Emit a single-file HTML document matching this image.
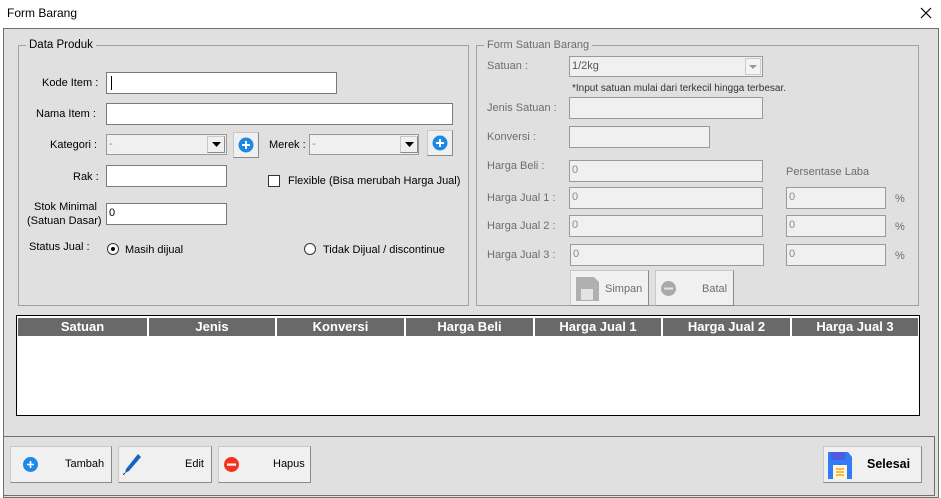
<!DOCTYPE html><html><head><style>
*{box-sizing:border-box;margin:0;padding:0}
body{width:941px;height:489px;background:#fff;font-family:"Liberation Sans",sans-serif;font-size:11px;color:#000;position:relative;overflow:hidden}
.a{position:absolute}
.in{position:absolute;background:#fff;border:1px solid #7a7a7a;height:22px}
.dis{background:#f0f0f0;border:1px solid #9a9a9a;color:#8a8a8a;padding:3px 0 0 2px}
.lbl{position:absolute;white-space:nowrap}
.gl{color:#6d6d6d}
fieldset{position:absolute;border:1px solid #a0a0a0}
.btn{position:absolute;background:#f0f0f0;border:1px solid #c8c8c8;border-right-color:#8a8a8a;border-bottom-color:#8a8a8a}
.th{position:absolute;top:0;height:18px;color:#fff;font-weight:bold;font-size:13px;text-align:center;line-height:18px;border-left:2px solid #fff}
</style></head><body>
<div class="lbl" style="left:7px;top:6px;font-size:12px">Form Barang</div>
<svg class="a" style="left:920px;top:7px" width="12" height="12"><path d="M1 1L11 11M11 1L1 11" stroke="#000" stroke-width="1.2"/></svg>
<div class="a" style="left:3px;top:28px;width:936px;height:470px;background:#e0e0e0;border:1px solid #707070"></div>

<div class="a" style="left:18px;top:45px;width:451px;height:261px;border:1px solid #a0a0a0"></div>
<div class="lbl" style="left:26px;top:39px;background:#e0e0e0;padding:0 3px;font-size:11.5px">Data Produk</div>
<div class="lbl" style="left:42px;top:77px">Kode Item :</div>
<div class="in" style="left:106px;top:72px;width:231px"><div class="a" style="left:4px;top:3px;width:1px;height:14px;background:#000"></div></div>
<div class="lbl" style="left:36px;top:108px">Nama Item :</div>
<div class="in" style="left:106px;top:103px;width:347px"></div>
<div class="lbl" style="left:50px;top:139px">Kategori :</div>
<div class="in dis" style="left:106px;top:134px;width:121px;height:21px">-</div>
<div class="btn" style="left:207px;top:136px;width:18px;height:17px"><svg class="a" style="left:4px;top:5px" width="9" height="6"><path d="M0 0H9L4.5 5z" fill="#000"/></svg></div>
<div class="btn" style="left:233px;top:132px;width:26px;height:26px"><svg class="a" style="left:4px;top:4px" width="16" height="16"><circle cx="8" cy="8" r="7.5" fill="#1e88e5"/><path d="M8 4v8M4 8h8" stroke="#fff" stroke-width="2"/></svg></div>
<div class="lbl" style="left:269px;top:139px">Merek :</div>
<div class="in dis" style="left:309px;top:134px;width:110px;height:21px">-</div>
<div class="btn" style="left:400px;top:136px;width:18px;height:17px"><svg class="a" style="left:4px;top:5px" width="9" height="6"><path d="M0 0H9L4.5 5z" fill="#000"/></svg></div>
<div class="btn" style="left:427px;top:130px;width:26px;height:26px"><svg class="a" style="left:4px;top:4px" width="16" height="16"><circle cx="8" cy="8" r="7.5" fill="#1e88e5"/><path d="M8 4v8M4 8h8" stroke="#fff" stroke-width="2"/></svg></div>
<div class="lbl" style="left:73px;top:171px">Rak :</div>
<div class="in" style="left:106px;top:165px;width:121px"></div>
<div class="a" style="left:268px;top:175px;width:12px;height:12px;background:#fff;border:1px solid #333"></div>
<div class="lbl" style="left:288px;top:175px">Flexible (Bisa merubah Harga Jual)</div>
<div class="lbl" style="left:34px;top:201px">Stok Minimal</div>
<div class="lbl" style="left:27px;top:215px">(Satuan Dasar)</div>
<div class="in" style="left:106px;top:203px;width:121px;padding:3px 0 0 2px">0</div>
<div class="lbl" style="left:29px;top:241px">Status Jual :</div>
<div class="a" style="left:107px;top:243px;width:12px;height:12px;border-radius:50%;background:#fff;border:1px solid #333"><div class="a" style="left:3px;top:3px;width:4px;height:4px;border-radius:50%;background:#000"></div></div>
<div class="lbl" style="left:125px;top:244px">Masih dijual</div>
<div class="a" style="left:304px;top:243px;width:12px;height:12px;border-radius:50%;background:#fff;border:1px solid #333"></div>
<div class="lbl" style="left:323px;top:244px">Tidak Dijual / discontinue</div>

<div class="a" style="left:476px;top:45px;width:443px;height:261px;border:1px solid #a0a0a0"></div>
<div class="lbl gl" style="left:484px;top:39px;background:#e0e0e0;padding:0 3px">Form Satuan Barang</div>
<div class="lbl gl" style="left:487px;top:60px">Satuan :</div>
<div class="in dis" style="left:569px;top:56px;width:194px;height:21px;color:#555">1/2kg</div>
<div class="a" style="left:745px;top:58px;width:16px;height:17px;background:#f4f4f4;border:1px solid #ccc"><svg class="a" style="left:3px;top:6px" width="9" height="5"><path d="M0 0H8L4 4z" fill="#999"/></svg></div>
<div class="lbl" style="left:572px;top:83px;font-size:10px;color:#333">*Input satuan mulai dari terkecil hingga terbesar.</div>
<div class="lbl gl" style="left:487px;top:102px">Jenis Satuan :</div>
<div class="in dis" style="left:569px;top:97px;width:194px"></div>
<div class="lbl gl" style="left:487px;top:131px">Konversi :</div>
<div class="in dis" style="left:569px;top:126px;width:141px"></div>
<div class="lbl gl" style="left:487px;top:160px">Harga Beli :</div>
<div class="in dis" style="left:569px;top:160px;width:194px">0</div>
<div class="lbl gl" style="left:786px;top:166px">Persentase Laba</div>
<div class="lbl gl" style="left:487px;top:192px">Harga Jual 1 :</div>
<div class="in dis" style="left:569px;top:187px;width:194px">0</div>
<div class="in dis" style="left:786px;top:187px;width:100px">0</div>
<div class="lbl gl" style="left:895px;top:193px">%</div>
<div class="lbl gl" style="left:487px;top:220px">Harga Jual 2 :</div>
<div class="in dis" style="left:569px;top:215px;width:194px">0</div>
<div class="in dis" style="left:786px;top:215px;width:100px">0</div>
<div class="lbl gl" style="left:895px;top:221px">%</div>
<div class="lbl gl" style="left:487px;top:249px">Harga Jual 3 :</div>
<div class="in dis" style="left:570px;top:244px;width:194px">0</div>
<div class="in dis" style="left:786px;top:244px;width:100px">0</div>
<div class="lbl gl" style="left:895px;top:250px">%</div>
<div class="btn" style="left:570px;top:270px;width:79px;height:36px"><svg class="a" style="left:4px;top:6px" width="24" height="24"><path d="M1 0H19L24 5V24H1z" fill="#b0b0b0"/><rect x="6" y="12" width="12" height="11" fill="#e4e4e4"/></svg><span class="a gl" style="left:34px;top:12px">Simpan</span></div>
<div class="btn" style="left:655px;top:270px;width:79px;height:36px"><svg class="a" style="left:5px;top:10px" width="15" height="15"><circle cx="7.5" cy="7.5" r="7.5" fill="#aaa"/><rect x="3" y="6.5" width="9" height="2" fill="#e4e4e4"/></svg><span class="a gl" style="left:46px;top:12px">Batal</span></div>

<div class="a" style="left:16px;top:315px;width:904px;height:101px;background:#fff;border:1px solid #000">
<div class="a" style="left:1px;top:2px;width:900px;height:18px;background:#696969">
<div class="th" style="left:0;width:129px;border-left:none">Satuan</div>
<div class="th" style="left:129px;width:128px">Jenis</div>
<div class="th" style="left:257px;width:129px">Konversi</div>
<div class="th" style="left:386px;width:129px">Harga Beli</div>
<div class="th" style="left:515px;width:128px">Harga Jual 1</div>
<div class="th" style="left:643px;width:129px">Harga Jual 2</div>
<div class="th" style="left:772px;width:128px">Harga Jual 3</div>
</div></div>

<div class="a" style="left:3px;top:436px;width:932px;height:60px;border:1px solid #707070"></div>
<div class="btn" style="left:10px;top:446px;width:102px;height:37px"><svg class="a" style="left:12px;top:10px" width="15" height="15"><circle cx="7.5" cy="7.5" r="7.5" fill="#1e88e5"/><path d="M7.5 4v7M4 7.5h7" stroke="#fff" stroke-width="1.6"/></svg><span class="a" style="left:54px;top:11px">Tambah</span></div>
<div class="btn" style="left:118px;top:446px;width:94px;height:37px"><svg class="a" style="left:4px;top:6px" width="18" height="22"><path d="M15 1L18 4L6 18L2 20L3 16z" fill="#1565c0"/><path d="M2 20L0 22" stroke="#333"/></svg><span class="a" style="left:66px;top:11px">Edit</span></div>
<div class="btn" style="left:218px;top:446px;width:93px;height:37px"><svg class="a" style="left:5px;top:10px" width="15" height="15"><circle cx="7.5" cy="7.5" r="7.5" fill="#f4331f"/><rect x="3" y="6.5" width="9" height="2.2" fill="#fff"/></svg><span class="a" style="left:54px;top:11px">Hapus</span></div>
<div class="btn" style="left:823px;top:446px;width:99px;height:37px"><svg class="a" style="left:4px;top:5px" width="24" height="27"><path d="M0 0H20L24 5V27H0z" fill="#2f7df6"/><rect x="3" y="0" width="14" height="8" fill="#4f5ae0"/><rect x="5" y="13" width="14" height="14" fill="#fff6d8"/><path d="M8 17h8M8 20h8M8 23h8" stroke="#f5a623" stroke-width="1.5"/></svg><span class="a" style="left:43px;top:10px;font-weight:bold;font-size:12.5px">Selesai</span></div>
</body></html>
